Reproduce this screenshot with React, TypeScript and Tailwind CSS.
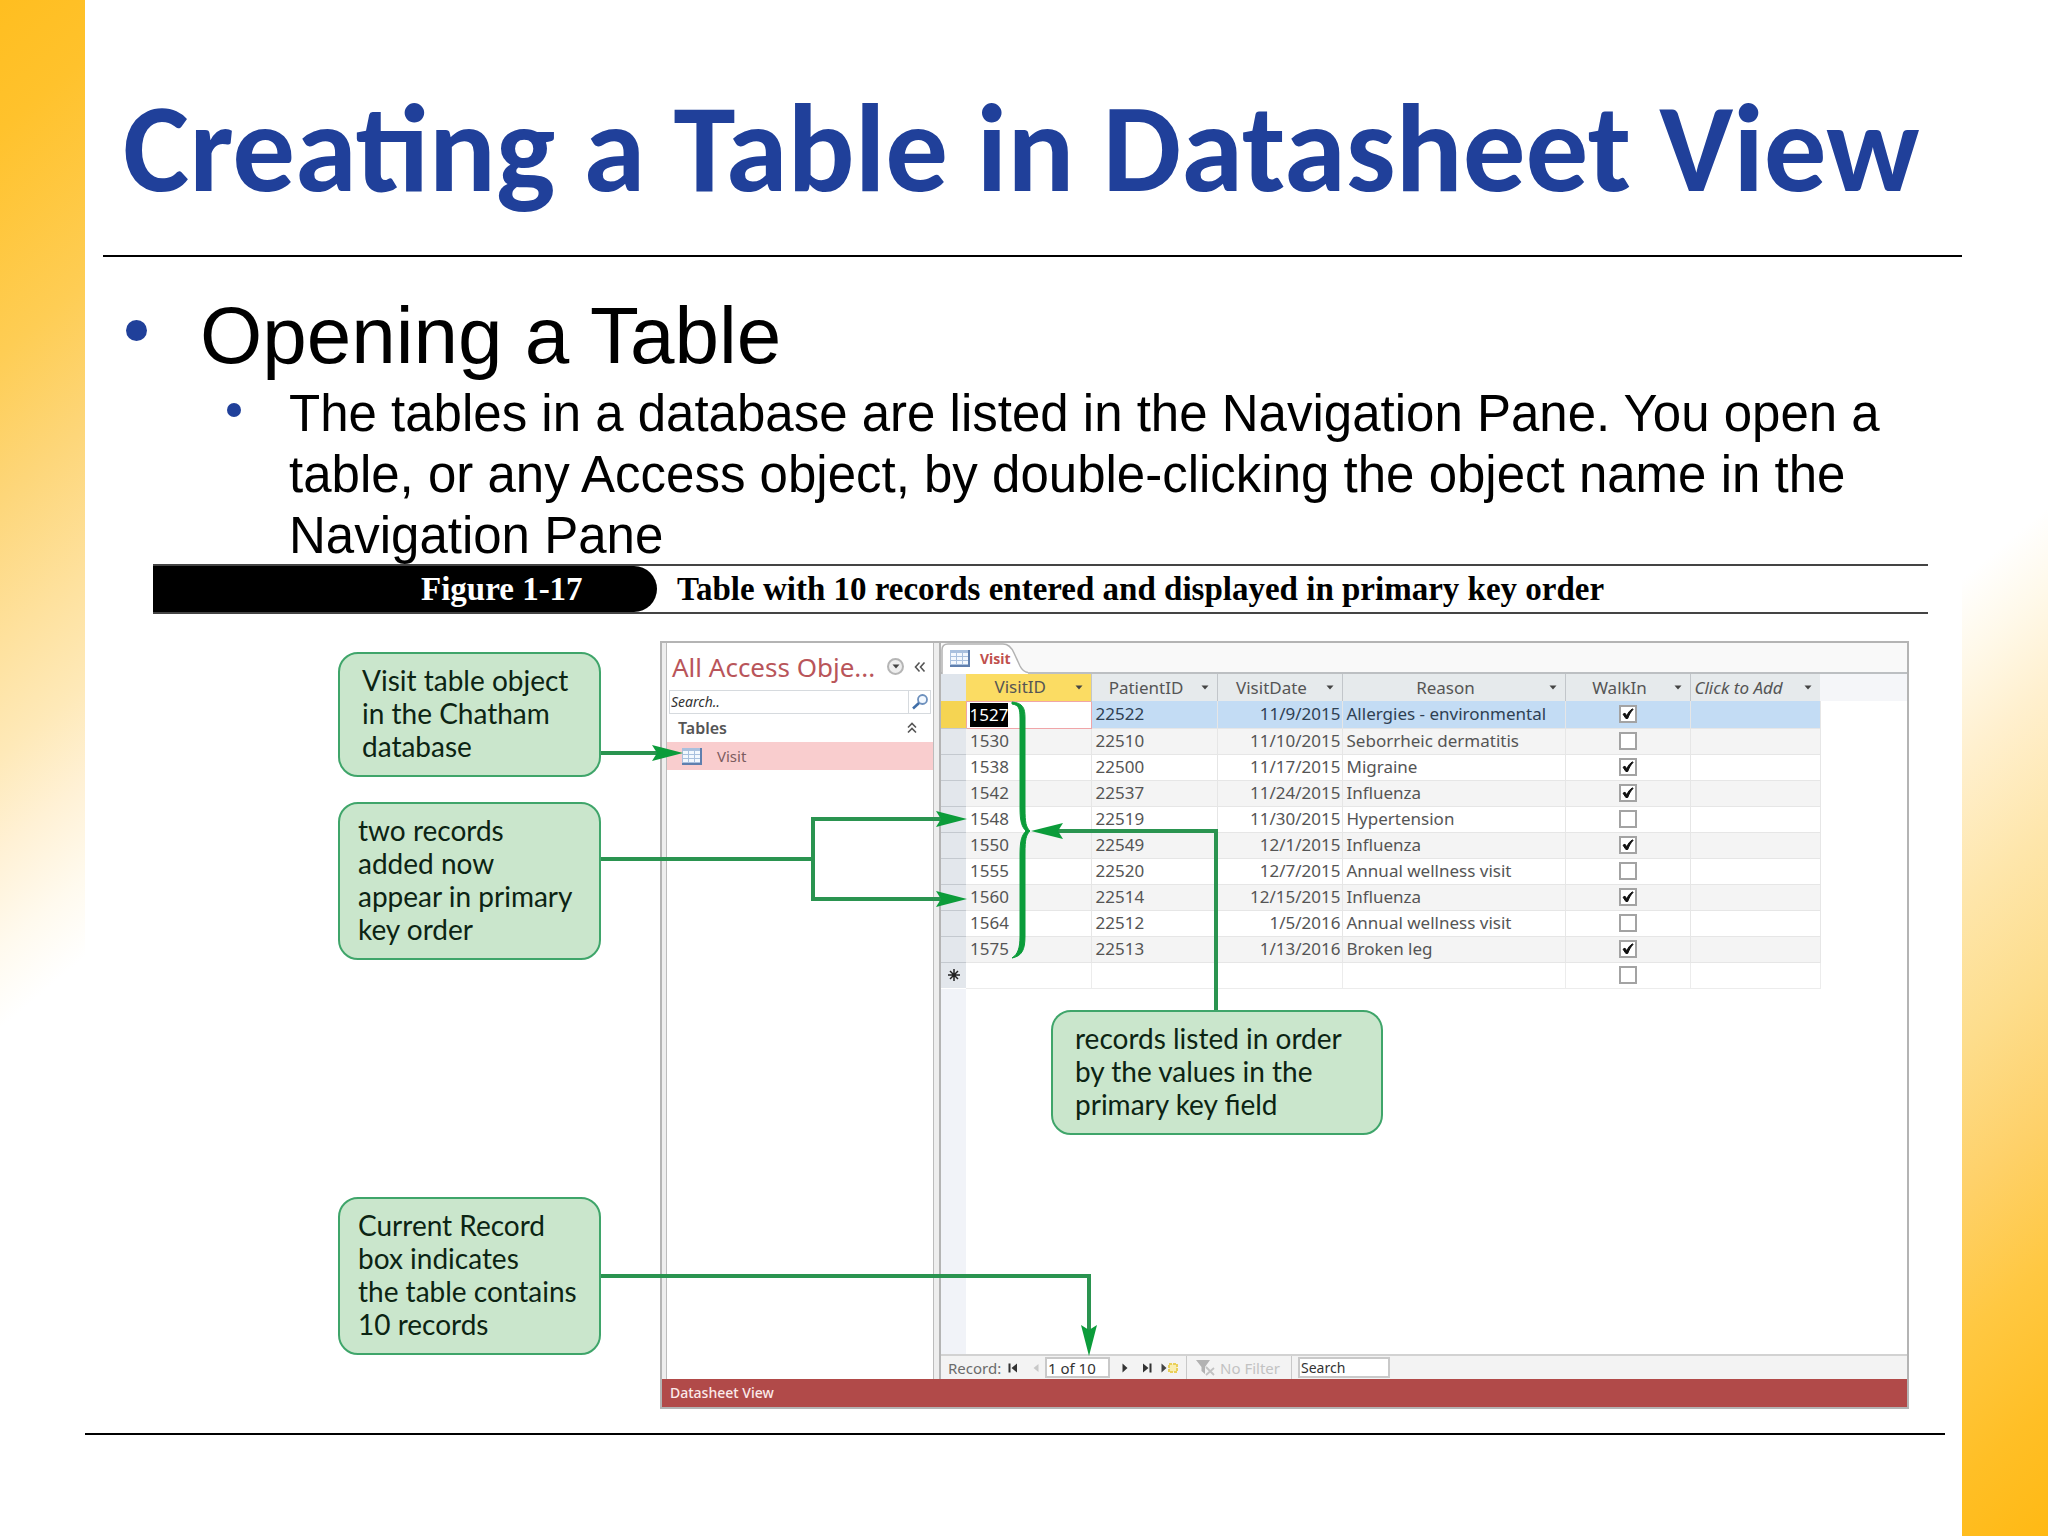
import type { ReactNode } from 'react'

interface Visit {
  id: string
  patient: string
  date: string
  reason: string
  walkIn: boolean
}

const VISITS: Visit[] = [
  { id: '1527', patient: '22522', date: '11/9/2015', reason: 'Allergies - environmental', walkIn: true },
  { id: '1530', patient: '22510', date: '11/10/2015', reason: 'Seborrheic dermatitis', walkIn: false },
  { id: '1538', patient: '22500', date: '11/17/2015', reason: 'Migraine', walkIn: true },
  { id: '1542', patient: '22537', date: '11/24/2015', reason: 'Influenza', walkIn: true },
  { id: '1548', patient: '22519', date: '11/30/2015', reason: 'Hypertension', walkIn: false },
  { id: '1550', patient: '22549', date: '12/1/2015', reason: 'Influenza', walkIn: true },
  { id: '1555', patient: '22520', date: '12/7/2015', reason: 'Annual wellness visit', walkIn: false },
  { id: '1560', patient: '22514', date: '12/15/2015', reason: 'Influenza', walkIn: true },
  { id: '1564', patient: '22512', date: '1/5/2016', reason: 'Annual wellness visit', walkIn: false },
  { id: '1575', patient: '22513', date: '1/13/2016', reason: 'Broken leg', walkIn: true },
]

const COLUMNS = ['VisitID', 'PatientID', 'VisitDate', 'Reason', 'WalkIn']

const LINE = '#2a9450'
const HEAD = '#0b9c3a'

function TableIcon() {
  return (
    <svg width="20" height="17" viewBox="0 0 20 17" className="shrink-0" aria-hidden="true">
      <rect x="0" y="0" width="20" height="17" fill="#5f7fae" />
      <rect x="0" y="0" width="18" height="15" fill="#a9c0de" />
      {[1, 7, 13].map((x) =>
        [3, 7, 11].map((y) => <rect key={`${x}-${y}`} x={x} y={y} width="5" height="3" fill="#f3f8fe" />),
      )}
    </svg>
  )
}

function Caret() {
  return (
    <svg width="8" height="5" viewBox="0 0 8 5" className="shrink-0" aria-hidden="true">
      <path d="M0.5 0.5h7L4 4.5z" fill="#444" />
    </svg>
  )
}

function Tick({ label, checked }: { label: string; checked: boolean }) {
  return (
    <span className="relative block size-[18px]">
      <input
        type="checkbox"
        aria-label={label}
        defaultChecked={checked}
        className="peer block size-[18px] appearance-none border-2 border-[#a3a3a3] bg-white"
      />
      <svg
        viewBox="0 0 18 18"
        className="pointer-events-none absolute inset-0 hidden size-[18px] peer-checked:block"
        aria-hidden="true"
      >
        <path d="M4 9.2l2-1 1.8 2.6C9.2 7.5 11 5.3 13.6 3.8l.4.6C11.7 7 10 10 8.7 13.5H6.9z" fill="#111" stroke="#111" />
      </svg>
    </span>
  )
}

function Callout({ children, wide = false }: { children: ReactNode; wide?: boolean }) {
  return (
    <div
      className={`rounded-[20px] border-2 border-[#3fa56a] bg-[#cae6cc] pt-[10px] pb-[12px] font-[Lato,sans-serif] text-[28px] leading-[33px] whitespace-nowrap text-[#0c2413] ${wide ? 'pl-[22px]' : 'pl-[18px]'}`}
    >
      {children}
    </div>
  )
}

function NavigationPane() {
  return (
    <aside className="flex w-[279px] shrink-0 flex-col border-r-2 border-[#b4b4b4] bg-[#eeeeee] pr-[5px] pl-[4px] font-['Noto_Sans',sans-serif]">
      <div className="flex-1 border-x border-[#bcbcbc] bg-white">
        <div className="flex h-[47px] items-center pr-[7px] pl-[5px]">
          <h2 className="flex-1 text-[26px] leading-[34px] whitespace-nowrap text-[#b9555a]">All Access Obje...</h2>
          <button type="button" aria-label="Choose category" className="flex size-[17px] items-center justify-center rounded-full border-2 border-[#b5b5b5] bg-[#eee]">
            <Caret />
          </button>
          <button type="button" aria-label="Collapse pane" className="ml-[10px]">
            <svg width="12" height="12" viewBox="0 0 12 12" fill="none" stroke="#555" strokeWidth="1.6">
              <path d="M5.5 1.5L1.5 6l4 4.5M10.5 1.5L6.5 6l4 4.5" />
            </svg>
          </button>
        </div>
        <div className="mx-[2px] flex h-[24px] border border-[#d6dade]">
          <input
            type="text"
            aria-label="Search objects"
            placeholder="Search.."
            className="w-0 flex-1 px-px text-[14px] leading-[20px] italic placeholder:text-[#333] focus:outline-none"
          />
          <button type="button" aria-label="Search" className="flex w-[22px] items-center justify-center border-l border-[#d6dade]">
            <svg width="18" height="16" viewBox="0 0 18 16" fill="none">
              <circle cx="11.5" cy="5.5" r="4.5" stroke="#6d90bd" strokeWidth="1.8" fill="#f2f8ff" />
              <path d="M8 9L2 14.5" stroke="#3f6ea8" strokeWidth="2.6" />
            </svg>
          </button>
        </div>
        <div className="flex h-[28px] items-center justify-between pr-[16px] pl-[11px] text-[#555]">
          <h3 className="text-[16px] leading-[20px] font-semibold">Tables</h3>
          <svg width="10" height="12" viewBox="0 0 10 12" fill="none" stroke="#555" strokeWidth="1.6" aria-hidden="true">
            <path d="M1 5.5L5 1.5l4 4M1 10.5L5 6.5l4 4" />
          </svg>
        </div>
        <a href="#visit" className="flex h-[28px] items-center gap-[15px] bg-[#f9cdce] pl-[15px] text-[15px] leading-[20px] text-[#7c5c60]">
          <TableIcon />
          Visit
        </a>
      </div>
    </aside>
  )
}

function Datasheet() {
  return (
    <table className="w-full table-fixed border-collapse font-['Noto_Sans',sans-serif] text-[17px] leading-[20px] text-[#555]">
      <colgroup>
        <col className="w-[25px]" />
        <col className="w-[125px]" />
        <col className="w-[126px]" />
        <col className="w-[125px]" />
        <col className="w-[223px]" />
        <col className="w-[125px]" />
        <col className="w-[130px]" />
        <col />
      </colgroup>
      <thead>
        <tr className="h-[27px] bg-[#e6eaec]">
          <td className="bg-[#dfe5ec] p-0" />
          {COLUMNS.map((name) => (
            <th key={name} scope="col" className="border-r border-[#c2c6ca] p-0 font-normal nth-2:bg-[#fbdc63]">
              <div className="flex items-center pr-[8px]">
                <span className="flex-1 text-center">{name}</span>
                <Caret />
              </div>
            </th>
          ))}
          <th scope="col" className="p-0 font-normal whitespace-nowrap italic">
            <div className="flex items-center justify-between pr-[8px] pl-[4px]">
              Click to Add
              <Caret />
            </div>
          </th>
          <td className="bg-[#f5f6f9]" />
        </tr>
      </thead>
      <tbody>
        {VISITS.map((v, i) => (
          <tr key={v.id} className={i === 0 ? 'h-[27px] bg-[#c3dcf4] text-[#2f4052]' : 'h-[26px] even:bg-[#f4f4f4]'}>
            <td className={i === 0 ? 'border-b border-[#c4c9cf] bg-[#f5d452] p-0' : 'border-b border-[#c4c9cf] bg-[#e3e7ec] p-0'} />
            <td className={i === 0 ? 'border border-[#f0a5a8] bg-white p-0 pl-[3px]' : 'border-r border-b border-[#e6e6e6] p-0 pl-[4px]'}>
              <span className={i === 0 ? 'inline-block bg-black leading-[24px] text-white' : ''}>{v.id}</span>
            </td>
            <td className="border-r border-b border-[#e6e6e6] p-0 pl-[4px]">{v.patient}</td>
            <td className="border-r border-b border-[#e6e6e6] p-0 pr-px text-right">{v.date}</td>
            <td className="border-r border-b border-[#e6e6e6] p-0 pl-[4px] whitespace-nowrap">{v.reason}</td>
            <td className="border-r border-b border-[#e6e6e6] p-0">
              <div className="flex justify-center">
                <Tick label={`Walk-in ${v.id}`} checked={v.walkIn} />
              </div>
            </td>
            <td className="border-r border-b border-[#e6e6e6] p-0" />
            <td className="bg-white p-0" />
          </tr>
        ))}
        <tr className="h-[26px]">
          <td className="bg-[#e3e7ec] p-0">
            <svg width="14" height="14" viewBox="0 0 14 14" className="mx-auto block" stroke="#222" strokeWidth="1.5" aria-hidden="true">
              <path d="M7 1v12M1 7h12M3 3l8 8M11 3l-8 8" />
            </svg>
          </td>
          <td className="border-r border-b border-[#ececec]" />
          <td className="border-r border-b border-[#ececec]" />
          <td className="border-r border-b border-[#ececec]" />
          <td className="border-r border-b border-[#ececec]" />
          <td className="border-r border-b border-[#ececec] p-0">
            <div className="flex justify-center">
              <Tick label="Walk-in, new record" checked={false} />
            </div>
          </td>
          <td className="border-r border-b border-[#ececec]" />
          <td />
        </tr>
      </tbody>
    </table>
  )
}

function RecordBar() {
  return (
    <div className="flex h-[25px] items-center border-t-2 border-[#d2d2d2] bg-[#f3f3f3] pl-[7px] font-['Noto_Sans',sans-serif] text-[15px] leading-[20px] text-[#6b6b6b]">
      <label htmlFor="record" className="w-[60px]">Record:</label>
      <button type="button" aria-label="First record" className="w-[25px]">
        <svg width="10" height="10" viewBox="0 0 10 10" fill="#333">
          <path d="M0.5 0.5h2v9h-2zM9 0.5v9L3.5 5z" />
        </svg>
      </button>
      <button type="button" aria-label="Previous record" className="w-[12px]">
        <svg width="6" height="10" viewBox="0 0 6 10" fill="#c8c8c8">
          <path d="M5.5 1v8L0.5 5z" />
        </svg>
      </button>
      <input
        id="record"
        type="text"
        defaultValue="1 of 10"
        className="h-[21px] w-[65px] border-2 border-[#c9c9c9] bg-white px-px text-[#333] focus:outline-none"
      />
      <button type="button" aria-label="Next record" className="ml-[12px] w-[20px]">
        <svg width="6" height="10" viewBox="0 0 6 10" fill="#333">
          <path d="M0.5 0.5v9L5.5 5z" />
        </svg>
      </button>
      <button type="button" aria-label="Last record" className="w-[19px]">
        <svg width="10" height="10" viewBox="0 0 10 10" fill="#333">
          <path d="M1 0.5v9L6.5 5zM7.5 0.5h2v9h-2z" />
        </svg>
      </button>
      <button type="button" aria-label="New record" className="w-[25px]">
        <svg width="17" height="10" viewBox="0 0 17 10">
          <path d="M0.5 0.5v9L5.5 5z" fill="#444" />
          <path d="M8 1h8v8H8z" fill="#f9eeb0" stroke="#ead05a" strokeWidth="2" strokeDasharray="3 1" />
        </svg>
      </button>
      <div className="flex h-full w-[106px] items-center gap-[4px] border-x border-[#c9c9c9] pl-[9px] text-[#c2c2c2]">
        <svg width="20" height="18" viewBox="0 0 20 18" className="shrink-0" aria-hidden="true">
          <path d="M0 1h14L9 8v7L5.5 12V8z" fill="#b2b2b2" />
          <path d="M10 8l8 8M18 9l-8 7" stroke="#c2c2c2" strokeWidth="1.8" />
        </svg>
        <span className="whitespace-nowrap">No Filter</span>
      </div>
      <input
        type="text"
        aria-label="Search records"
        defaultValue="Search"
        className="ml-[6px] h-[21px] w-[92px] border-2 border-[#c9c9c9] bg-white px-px text-[14px] text-[#333] focus:outline-none"
      />
    </div>
  )
}

function AccessWindow() {
  return (
    <div className="flex min-h-[768px] flex-1 flex-col border-2 border-[#b4b4b4] bg-white">
      <div className="flex flex-1">
        <NavigationPane />
        <section className="flex flex-1 flex-col">
          <div className="flex h-[31px] border-b-2 border-[#bcbfc2] bg-[#f9f9f9]">
            <div className="relative flex h-[31px] w-[86px] items-center gap-[10px] pl-[9px]">
              <svg width="88" height="31" viewBox="0 0 88 31" className="absolute top-0 left-0" aria-hidden="true">
                <path d="M1 31V7Q1 1 7 1H62Q69 1 73 10L79 23Q82 29 87 29.5V31z" fill="#fff" />
                <path d="M1 31V7Q1 1 7 1H62Q69 1 73 10L79 23Q82 29 87 29.5" fill="none" stroke="#b3b3b3" strokeWidth="1.5" />
              </svg>
              <span className="relative"><TableIcon /></span>
              <span className="relative font-['Noto_Sans',sans-serif] text-[14px] leading-[20px] font-bold text-[#c0504d]">Visit</span>
            </div>
          </div>
          <Datasheet />
          <div className="w-[25px] flex-1 bg-[#f1f3f8]" />
          <RecordBar />
        </section>
      </div>
      <div className="flex h-[28px] items-center bg-[#b14a49] pl-[8px] font-['Noto_Sans',sans-serif] text-[14px] leading-[20px] font-medium text-[#fbe9e9]">
        Datasheet View
      </div>
    </div>
  )
}

// Leader lines from the callouts to the parts of the window they describe
function Leaders() {
  return (
    <svg className="pointer-events-none absolute inset-0 size-full overflow-visible" fill="none" aria-hidden="true">
      <g stroke={LINE} strokeWidth="4">
        <path d="M448 139H505" />
        <path d="M448 245H660M790 205H660V285H790" />
        <path d="M900 217H1063V396" />
        <path d="M448 662H936V720" />
      </g>
      <g fill={HEAD}>
        <path d="M530 139L499 131L504 139L499 147z" />
        <path d="M814 205L783 197L788 205L783 213z" />
        <path d="M814 285L783 277L788 285L783 293z" />
        <path d="M878 217L910 209L905 217L910 225z" />
        <path d="M936 742L928 711L936 716L944 711z" />
        <path
          d="M859 88C870 89 872 94 872 104V194C872 209 873 213 877 217C873 221 872 225 872 240V322C872 336 869 342 859 344C865 340 867 334 867 322V240C867 226 869 221 873 217C869 213 867 208 867 194V104C867 95 866 91 859 90z"
          stroke={HEAD}
          strokeWidth="1"
        />
      </g>
    </svg>
  )
}

export default function App() {
  return (
    <div className="flex min-h-screen bg-white">
      <div className="w-[85px] shrink-0 bg-[linear-gradient(140deg,#ffbe20_0%,#ffc22c_8%,#fecd54_22%,#fdd679_31%,#fee19d_40%,#fee9b8_47%,#fff1d5_53%,#fffaee_59%,#ffffff_64%)]" />
      <main className="flex min-w-0 flex-1 flex-col font-['Liberation_Sans',Arial,sans-serif] text-black">
        <h1 className="ml-[18px] flex h-[257px] items-center border-b-2 border-black pt-[42px] pl-[20px] font-[Carlito,Lato,sans-serif] text-[125px] leading-[150px] font-bold whitespace-nowrap text-[#20409a]">
          Creating a Table in Datasheet View
        </h1>
        <ul className="mt-[33px] pl-[41px]">
          <li>
            <div className="flex items-start">
              <span className="mt-[30px] mr-[53px] size-[21px] rounded-full bg-[#20409a]" />
              <span className="text-[80px] leading-[92px]">Opening a Table</span>
            </div>
            <ul>
              <li className="flex items-start pt-px pl-[101px]">
                <span className="mt-[20px] mr-[48px] size-[14px] shrink-0 rounded-full bg-[#20409a]" />
                <span className="w-[1620px] text-[51px] leading-[61px]">
                  The tables in a database are listed in the Navigation Pane. You open a table, or any Access object, by double-clicking the object name in the Navigation Pane
                </span>
              </li>
            </ul>
          </li>
        </ul>
        <figure className="-mt-[2px] mr-[34px] ml-[68px]">
          <figcaption className="flex h-[50px] items-center border-y-2 border-[#444] font-['Liberation_Serif',serif] text-[33px] leading-[40px] font-bold">
            <span className="flex h-full w-[504px] items-center rounded-r-[24px] bg-black pl-[268px] text-white">Figure 1-17</span>
            <span className="ml-[20px] whitespace-nowrap">Table with 10 records entered and displayed in primary key order</span>
          </figcaption>
          <div className="relative flex pt-[27px] pr-[19px] pl-[185px]">
            <div className="mr-[59px] flex w-[263px] shrink-0 flex-col pt-[11px]">
              <Callout wide>Visit table object<br />in the Chatham<br />database</Callout>
              <div className="mt-[25px]">
                <Callout>two records<br />added now<br />appear in primary<br />key order</Callout>
              </div>
              <div className="mt-[237px]">
                <Callout>Current Record<br />box indicates<br />the table contains<br />10 records</Callout>
              </div>
            </div>
            <AccessWindow />
            <Leaders />
            <div className="absolute top-[396px] left-[898px] w-[332px]">
              <Callout wide>records listed in order<br />by the values in the<br />primary key field</Callout>
            </div>
          </div>
        </figure>
        <hr className="mt-[24px] mr-[17px] border-t-2 border-black" />
      </main>
      <div className="w-[86px] shrink-0 bg-[linear-gradient(140deg,#ffffff_36%,#fff9ea_41%,#fff0cf_47%,#fee6ab_56%,#fddd8c_65%,#fed16a_74%,#ffc842_83%,#ffbf26_92%,#ffb914_100%)]" />
    </div>
  )
}
